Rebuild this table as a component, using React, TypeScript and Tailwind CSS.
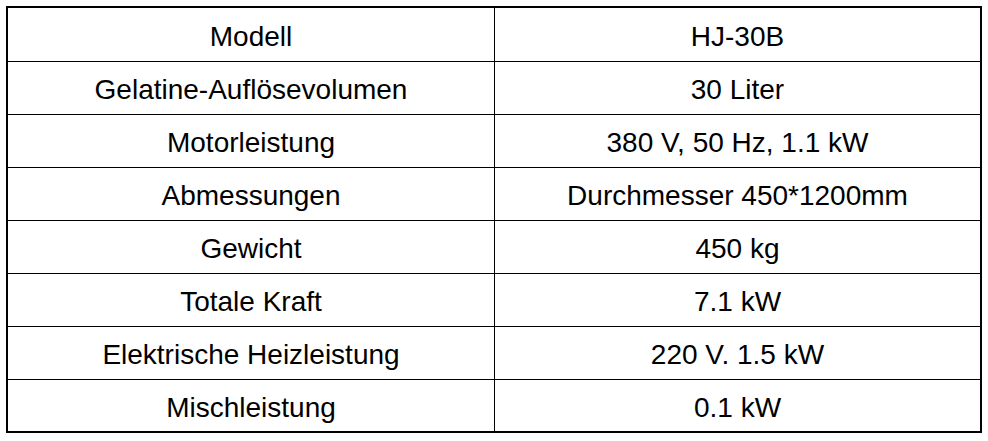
import React from 'react';

const rows: [string, string][] = [
  ['Modell', 'HJ-30B'],
  ['Gelatine-Auflösevolumen', '30 Liter'],
  ['Motorleistung', '380 V, 50 Hz, 1.1 kW'],
  ['Abmessungen', 'Durchmesser 450*1200mm'],
  ['Gewicht', '450 kg'],
  ['Totale Kraft', '7.1 kW'],
  ['Elektrische Heizleistung', '220 V. 1.5 kW'],
  ['Mischleistung', '0.1 kW'],
];

export default function App() {
  return (
    <div className="min-h-screen bg-white pt-[6px] pl-[6px] font-['Liberation_Sans',Arial,sans-serif] text-[28px] text-black">
      <div className="w-[976px] border-2 border-black">
        {rows.map(([label, value], i) => {
          const h =
            i === 0 ? 'h-[54px] border-b' : i === rows.length - 1 ? 'h-[51px]' : 'h-[53px] border-b';
          return (
            <div key={label} className={`flex border-black ${h}`}>
              <div className="flex w-[487px] items-center justify-center border-r border-black pt-[4px]">
                {label}
              </div>
              <div className="flex flex-1 items-center justify-center pt-[4px]">{value}</div>
            </div>
          );
        })}
      </div>
    </div>
  );
}
